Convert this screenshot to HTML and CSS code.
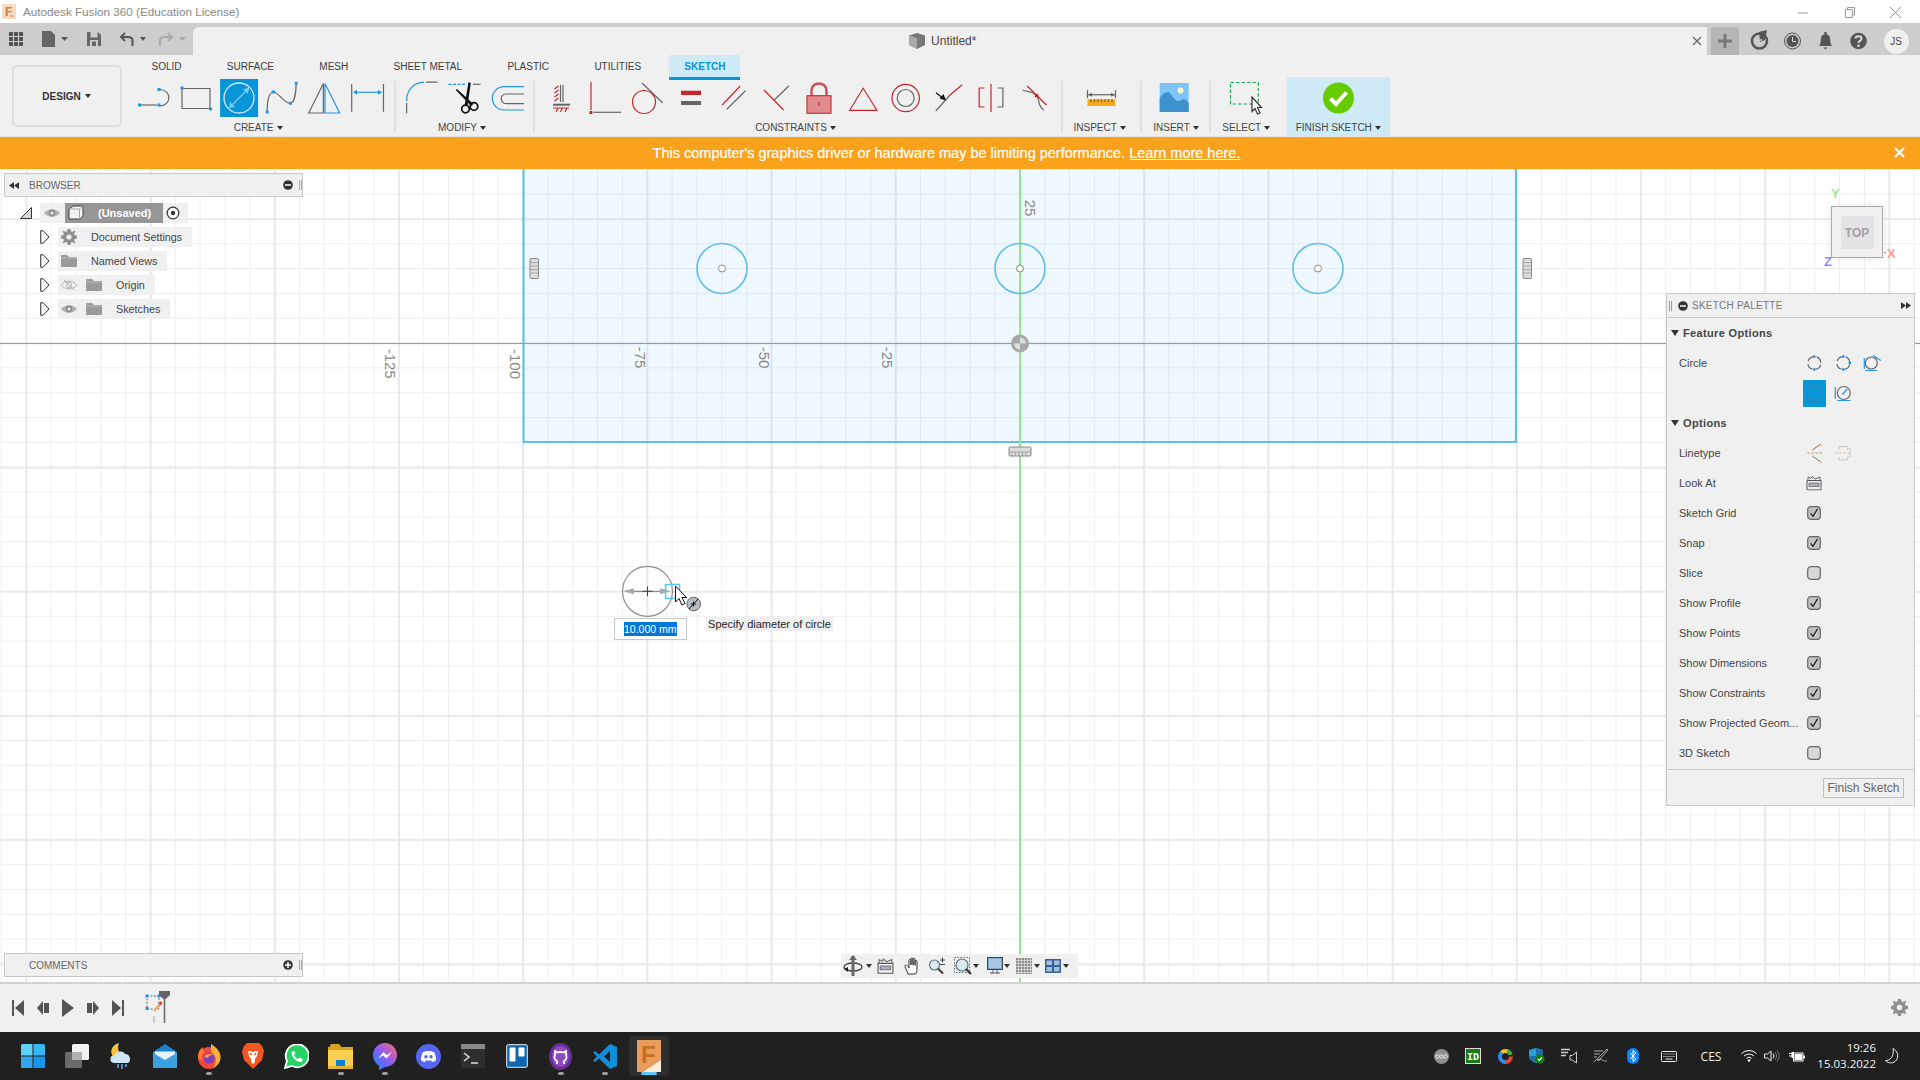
FILE: index.html
```html
<!DOCTYPE html>
<html lang="en">
<head>
<meta charset="utf-8">
<title>Autodesk Fusion 360</title>
<link rel="stylesheet" href="styles.css">
</head>
<body>
<svg class="defs" width="0" height="0">
  <symbol id="eye" viewBox="0 0 16 10"><path d="M0 5C4 0 12 0 16 5C12 10 4 10 0 5Z" fill="#b4b4b4"/><circle cx="8" cy="5" r="3.4" fill="#8c8c8c"/><circle cx="8" cy="5" r="1.6" fill="#eee"/></symbol>
  <symbol id="folder" viewBox="0 0 16 12"><path d="M0 0H6L8 2H16V12H0Z" fill="#9b9b9b"/><path d="M0 3H16" stroke="#c8c8c8" stroke-width=".8"/></symbol>
  <symbol id="gear" viewBox="0 0 16 16"><path d="M6.6 0H9.4L9.8 2.2L11.4 2.9L13.3 1.6L14.4 2.7L13.1 4.6L13.8 6.2L16 6.6V9.4L13.8 9.8L13.1 11.4L14.4 13.3L13.3 14.4L11.4 13.1L9.8 13.8L9.4 16H6.6L6.2 13.8L4.6 13.1L2.7 14.4L1.6 13.3L2.9 11.4L2.2 9.8L0 9.4V6.6L2.2 6.2L2.9 4.6L1.6 2.7L2.7 1.6L4.6 2.9L6.2 2.2Z" fill="#8f8f8f"/><circle cx="8" cy="8" r="2.6" fill="#f0f0f0"/></symbol>
  <symbol id="lookat" viewBox="0 0 16 15"><path d="M1 5H15V14.4H1Z" fill="#f0f0f0" stroke="#555" stroke-width="1"/><path d="M3 7.5H13V11H3Z" fill="#a9b4c0" stroke="#555" stroke-width=".7"/><path d="M2 5V1.5L5 3L6 1L9 3.5L14 1.5V5" fill="none" stroke="#666" stroke-width="1"/></symbol>
  <symbol id="tick" viewBox="0 0 14 14"><rect x=".7" y=".7" width="12.6" height="12.6" rx="3" fill="#c2c2c2" stroke="#666" stroke-width="1.2"/><path d="M3.6 7.4L6 10.3L10.6 2.8" fill="none" stroke="#111" stroke-width="1.2"/></symbol>
  <symbol id="untick" viewBox="0 0 14 14"><rect x=".7" y=".7" width="12.6" height="12.6" rx="3" fill="#d8d8d8" stroke="#666" stroke-width="1.2"/></symbol>
</svg>

<header class="titlebar">
  <svg class="applogo" width="14" height="15" viewBox="0 0 14 15"><rect width="14" height="15" fill="#f6dcc2"/><text x="3" y="12" class="applogo-f">F</text><rect x="8" y="11" width="4" height="2" fill="#f0b080"/></svg>
  <span class="apptitle">Autodesk Fusion 360 (Education License)</span>
  <div class="winctl">
    <svg width="46" height="20" viewBox="0 0 46 20"><path d="M18 11H28" stroke="#999"/></svg>
    <svg width="46" height="20" viewBox="0 0 46 20"><path d="M19.5 7.5H26.5V15.5H19.5ZM21.5 7V5.5H28.5V13H27" fill="none" stroke="#999"/></svg>
    <svg width="46" height="20" viewBox="0 0 46 20"><path d="M18 5L29 16M29 5L18 16" stroke="#999"/></svg>
  </div>
</header>

<div class="tabrow">
  <svg class="quick" width="193" height="28" viewBox="0 0 193 28">
    <g fill="#555"><path d="M9 5h4v4H9zM14 5h4v4h-4zM19 5h4v4h-4zM9 10h4v4H9zM14 10h4v4h-4zM19 10h4v4h-4zM9 15h4v4H9zM14 15h4v4h-4zM19 15h4v4h-4z"/>
    <path d="M42 4H51L55 8V20H42Z" fill="#666"/><path d="M61 10H68L64.500 14Z"/>
    <path d="M87 5H98L101 8V19H87Z" fill="#666"/>
    <path d="M140 10H146L143 14Z"/></g>
    <path d="M90.500 5H97.500V10.500H90.500Z" fill="#cdcdcd"/><path d="M90 13H98V19H90Z" fill="#cdcdcd"/><path d="M92 14.500H96V19H92Z" fill="#666"/>
    <path d="M132.500 19V13C132.500 10.500 130 10 127 10H122M125 6L121 10L125 14" fill="none" stroke="#555" stroke-width="2"/>
    <path d="M160 19V13C160 10.500 162.500 10 165 10H171M168 6L172 10L168 14" fill="none" stroke="#aaa" stroke-width="2"/>
    <path d="M179 10H186L182.500 14Z" fill="#aaa"/>
  </svg>
  <div class="doctab">
    <span></span>
    <div class="docname">
      <svg width="16" height="16" viewBox="0 0 16 16"><path d="M8 0L16 2.500V12L8 16L0 12V2.500Z" fill="#777"/><path d="M0 2.500L8 5V16L0 12Z" fill="#aaa"/></svg>
      <span>Untitled*</span>
    </div>
    <svg class="docclose" width="12" height="12" viewBox="0 0 12 12"><path d="M2 2L10 10M10 2L2 10" stroke="#666" stroke-width="1.300"/></svg>
  </div>
  <div class="acct">
    <div class="plus"><svg width="14" height="14" viewBox="0 0 14 14"><path d="M7 0V14M0 7H14" stroke="#777" stroke-width="3"/></svg></div>
    <svg class="acct-i" width="33" height="28" viewBox="0 0 33 28"><circle cx="16.500" cy="14" r="7.500" fill="none" stroke="#555" stroke-width="2.500"/><path d="M16 5L24 3L22 13L17 15Z" fill="#555"/><path d="M12 13H19" stroke="#ccc" stroke-width="1.500"/></svg>
    <svg class="acct-i" width="33" height="28" viewBox="0 0 33 28"><circle cx="16.500" cy="14" r="8" fill="none" stroke="#555" stroke-width="1"/><circle cx="16.500" cy="14" r="6" fill="#555"/><path d="M16.500 10V14.500H20" fill="none" stroke="#ddd" stroke-width="1"/></svg>
    <svg class="acct-i" width="33" height="28" viewBox="0 0 33 28"><path d="M10 19C12 17 11.500 14 12 11C12.500 8 14.500 7 16.500 7C18.500 7 20.500 8 21 11C21.500 14 21 17 23 19ZM14.500 20.500H18.500L16.500 22.500Z" fill="#555"/><circle cx="16.500" cy="6" r="1.300" fill="#555"/></svg>
    <svg class="acct-i" width="33" height="28" viewBox="0 0 33 28"><circle cx="16.500" cy="14" r="8.300" fill="#555"/><path d="M13.500 11.500C13.500 8.500 19.500 8.500 19.500 11.500C19.500 14 16.500 13.500 16.500 16" fill="none" stroke="#ddd" stroke-width="2"/><circle cx="16.500" cy="18.800" r="1.300" fill="#ddd"/></svg>
    <div class="avatar">JS</div>
  </div>
</div>

<section class="ribbon">
  <div class="design">DESIGN<i class="car car-dark"></i></div>
  <div class="rib-main">
    <nav class="tabs">
      <span class="tab">SOLID</span><span class="tab">SURFACE</span><span class="tab">MESH</span><span class="tab">SHEET METAL</span><span class="tab">PLASTIC</span><span class="tab">UTILITIES</span><span class="tab tab-on">SKETCH</span>
    </nav>
    <div class="tools">
      <div class="grp grp-create">
        <div class="cells">
          <svg class="ic" viewBox="0 0 43.200 38"><path class="s-g" d="M9 26H25"/><path class="s-g" d="M27.500 10.500C40 10.500 40 27 27.500 27"/><path class="f-b" d="M6 24.500h3v3H6zM25.500 24.500h3v3h-3zM25.500 9h3v3h-3z"/></svg>
          <svg class="ic" viewBox="0 0 43.200 38"><path class="s-g" d="M7 9.500H35V29.500H7Z"/><path class="f-b" d="M5.500 7.500h3v3h-3zM34 28.500h3v3h-3z"/></svg>
          <svg class="ic" viewBox="0 0 43.200 38"><rect x="2.100" width="38" height="38" fill="#0696d7"/><circle cx="21" cy="19" r="15" fill="none" stroke="#d5e9f5" stroke-width="1.300"/><path d="M11 29L31 9" stroke="#7ccbf0" stroke-width="1.300"/><path d="M11 29L12 23L17 28ZM31 9L25 10L30 15Z" fill="#7ccbf0"/></svg>
          <svg class="ic" viewBox="0 0 43.200 38"><path class="s-g" d="M6.200 33C6 22 8 13 12.400 13C18 13 23 25 29.500 24.300C33 24 35 15 35.200 4.300"/><path class="f-b" d="M4.700 31.500h3v3h-3zM10.900 11.500h3v3h-3zM28 22.800h3v3h-3zM33.700 2.800h3v3h-3z"/></svg>
          <svg class="ic" viewBox="0 0 43.200 38"><path class="s-g" d="M4.700 34L19.400 4.500V34Z"/><path class="s-b" d="M21 34H35.700L21 4.500Z"/></svg>
          <svg class="ic" viewBox="0 0 43.200 38"><path class="s-g" d="M4.700 5V32.700M36.500 5V32.700"/><path class="s-b" d="M7 13.300H34"/><path class="f-b" d="M6 13.300L10 10.800V15.800ZM35 13.300L31 10.800V15.800Z"/></svg>
        </div>
        <div class="lbl lbl-l">CREATE<i class="car"></i></div>
      </div>
      <i class="sep"></i>
      <div class="grp grp-modify">
        <div class="cells">
          <svg class="ic" viewBox="0 0 43.200 38"><path class="s-b" d="M6.600 22C6.600 12 13 3.500 24 3.200"/><path class="s-g" d="M6.600 24V34.300M26 3.200H37.600"/></svg>
          <svg class="ic" viewBox="0 0 43.200 38"><path class="s-b dash" d="M5.500 5.300H22"/><path class="s-g" d="M30 5.300H37.500"/><path d="M25.500 3L27.800 4L24.500 27H21.500ZM12.800 11L14 10L30.500 25L28 27Z" fill="#111"/><circle cx="22.500" cy="30" r="3.800" fill="none" stroke="#111" stroke-width="1.800"/><circle cx="31" cy="27.500" r="3.800" fill="none" stroke="#111" stroke-width="1.800"/></svg>
          <svg class="ic" viewBox="0 0 43.200 38"><path class="s-b" d="M37 7.700H17A11.650 11.650 0 0 0 17 31H37"/><path class="s-g" d="M37 15H19A4.800 4.800 0 0 0 19 24.600H37"/></svg>
        </div>
        <div class="lbl lbl-l">MODIFY<i class="car"></i></div>
      </div>
      <i class="sep"></i>
      <div class="grp grp-cons">
        <div class="cells">
          <svg class="ic" viewBox="0 0 43.200 38"><path class="s-g" d="M21.500 6V23M24 6V23"/><path d="M14 25.700H31" stroke="#666" stroke-width="2"/><path class="s-r" d="M19.500 7L15.500 10M19.500 11L15.500 14M19.500 15L15.500 18M19.500 19L15.500 22M17 33L19 29M21.500 33L23.500 29M26 33L28 29M14 29H30"/></svg>
          <svg class="ic" viewBox="0 0 43.200 38"><path class="s-r" d="M8 3V31"/><path class="s-g" d="M10.500 33.300H38"/><path d="M6.500 32h3v3h-3z" fill="#c8242c"/></svg>
          <svg class="ic" viewBox="0 0 43.200 38"><circle class="s-r" cx="18" cy="23" r="11.500"/><path class="s-g" d="M16 4L36.600 23.700"/></svg>
          <svg class="ic" viewBox="0 0 43.200 38"><path d="M12 11.700H32V16H12Z" fill="#c8242c"/><path d="M12 22H32V26H12Z" fill="#666"/></svg>
          <svg class="ic" viewBox="0 0 43.200 38"><path class="s-r" d="M10.200 26L28.200 7"/><path class="s-g" d="M14.800 30.300L33.500 11.700"/></svg>
          <svg class="ic" viewBox="0 0 43.200 38"><path class="s-r" d="M9 11L28.600 31"/><path class="s-g" d="M19.300 21L34 6.700"/></svg>
          <svg class="ic" viewBox="0 0 43.200 38"><path d="M13.500 17V11.800C13.500 2 28.500 2 28.500 11.800V17" fill="none" stroke="#c8525a" stroke-width="2.500"/><rect x="9" y="16.700" width="24" height="17.600" fill="#e08c8e" stroke="#c8353c" stroke-width="1.200"/><path class="s-r" d="M21 23V27"/></svg>
          <svg class="ic" viewBox="0 0 43.200 38"><path class="s-r" d="M7.600 31.300H34.900L21.200 9.300Z"/></svg>
          <svg class="ic" viewBox="0 0 43.200 38"><circle class="s-r" cx="20.700" cy="19" r="13.700"/><circle class="s-g" cx="20.700" cy="19" r="8.500"/></svg>
          <svg class="ic" viewBox="0 0 43.200 38"><path class="s-g" d="M7.800 32L22 16"/><path class="s-r" d="M22 16L34.200 5.700"/><path d="M8 13.700L14 18.500" stroke="#111" stroke-width="1.300"/><path d="M18 21.500L11.500 19.500L15.500 15Z" fill="#111"/></svg>
          <svg class="ic" viewBox="0 0 43.200 38"><path class="s-r" d="M13.500 9H8.200V28H13.500M20 5V33"/><path class="s-g" d="M26.500 9H31.900V28H26.500"/></svg>
          <svg class="ic" viewBox="0 0 43.200 38"><path class="s-r" d="M13.200 7L32.400 26"/><path class="s-g" d="M8.500 11C14 13 19 12 23 17C26 21 23 27 30 31"/><path d="M20.900 14.900h3.400v3.400h-3.400z" fill="#c8242c"/></svg>
        </div>
        <div class="lbl lbl-l">CONSTRAINTS<i class="car"></i></div>
      </div>
      <i class="sep"></i>
      <div class="grp grp-inspect">
        <svg class="ic" viewBox="0 0 43.200 38"><path d="M9.500 11V19M37.500 11V19" stroke="#666"/><path d="M10 15.700H37" stroke="#666"/><path d="M10 15.700L14 13.700V17.700ZM37 15.700L33 13.700V17.700Z" fill="#666"/><rect x="9.500" y="20.300" width="28" height="6.700" fill="#f5a81e"/><path d="M13 20.300V23M16.500 20.300V23M20 20.300V23M23.500 20.300V23M27 20.300V23M30.500 20.300V23M34 20.300V23" stroke="#8a6010"/></svg>
        <div class="lbl">INSPECT<i class="car"></i></div>
      </div>
      <i class="sep"></i>
      <div class="grp grp-insert">
        <svg class="ic" viewBox="0 0 43.200 38"><rect x="5.700" y="4" width="29" height="29" fill="#7dc4fa"/><path d="M5.700 33V19C8 15 11 13 14 13C17 13 20 22 24 22C27 22 28 20 30 20C32 20 33 22 34.700 24V33Z" fill="#3d92cc"/><circle cx="26.500" cy="11.500" r="3" fill="#fdf6c4"/></svg>
        <div class="lbl">INSERT<i class="car"></i></div>
      </div>
      <i class="sep"></i>
      <div class="grp grp-select">
        <svg class="ic" viewBox="0 0 43.200 38"><path d="M8.500 3.500H36.300V25H8.500Z" fill="none" stroke="#19a84b" stroke-width="1.200" stroke-dasharray="3.500 2"/><path d="M30 18V32.500L33 29.500L35.500 35L38 34L35.500 28.500H39.500Z" fill="#fff" stroke="#333"/></svg>
        <div class="lbl">SELECT<i class="car"></i></div>
      </div>
      <div class="grp grp-finish">
        <svg class="ic ic-finish" viewBox="0 0 43 38"><circle cx="21.500" cy="19" r="15.500" fill="#66cc00"/><path d="M13.500 19.500L19 25L29.500 13.500" fill="none" stroke="#fff" stroke-width="4"/></svg>
        <div class="lbl">FINISH SKETCH<i class="car"></i></div>
      </div>
    </div>
  </div>
</section>

<div class="banner">
  <p class="banner-text">This computer's graphics driver or hardware may be limiting performance. <a class="banner-link">Learn more here.</a></p>
  <svg class="banner-x" width="11" height="11" viewBox="0 0 11 11"><path d="M1 1L10 10M10 1L1 10" stroke="#fff" stroke-width="2"/></svg>
</div>

<main class="canvas">
  <svg class="scene" width="1920" height="813" viewBox="0 0 1920 813">
    <defs>
      <pattern id="minor" patternUnits="userSpaceOnUse" x="0.900" y="-0.340" width="24.840" height="24.840"><path d="M.5 0V24.840M0 .5H24.840" stroke="#eeeeee" fill="none"/></pattern>
      <pattern id="major" patternUnits="userSpaceOnUse" x="25.400" y="49.300" width="124.200" height="124.200"><path d="M1 0V124.200M0 1H124.200" stroke="#e6e6e6" stroke-width="1.600" fill="none"/></pattern>
    </defs>
    <rect width="1920" height="813" fill="#fff"/>
    <rect width="1920" height="813" fill="url(#minor)"/>
    <rect width="1920" height="813" fill="url(#major)"/>
    <rect x="523.500" y="-5" width="992.500" height="278" fill="#84ccf8" fill-opacity=".13" stroke="#5fbde9" stroke-width="2"/>
    <path d="M0 174.500H1920" stroke="#e27b7d"/>
    <path d="M1020 0V813" stroke="#93e296" stroke-width="2"/>
    <g fill="none" stroke="#5fbde9" stroke-width="1.600">
      <circle cx="722" cy="99.500" r="25"/><circle cx="1020" cy="99.500" r="25"/><circle cx="1318" cy="99.500" r="25"/>
    </g>
    <g fill="#fff" stroke="#888" stroke-width="1">
      <circle cx="722" cy="99.500" r="3.500"/><circle cx="1020" cy="99.500" r="3.500"/><circle cx="1318" cy="99.500" r="3.500"/>
    </g>
    <circle cx="1020" cy="174.500" r="7.500" fill="#d8dfe0" stroke="#a8a8a8" stroke-width="3"/>
    <path d="M1013 174.500A7 7 0 0 1 1020 167.500V174.500H1027A7 7 0 0 1 1020 181.500V174.500H1013Z" fill="#a8a8a8"/>
    <g fill="#dcdcdc" stroke="#888">
      <rect x="530" y="89.500" width="8.500" height="20" rx="1"/><rect x="1523" y="89.500" width="8.500" height="20" rx="1"/><rect x="1009" y="278" width="22" height="9" rx="1"/>
    </g>
    <path d="M530 93.500H538M530 97H538M530 100.500H538M530 104H538M1523 93.500H1531M1523 97H1531M1523 100.500H1531M1523 104H1531M1012 283V287M1015.500 283V287M1019 283V287M1022.500 283V287M1026 283V287M1009 283H1031" stroke="#999" stroke-width=".8"/>
    <g class="tick">
      <text transform="translate(390.400 194.700) rotate(90)">-125</text>
      <text transform="translate(515 195) rotate(90)">-100</text>
      <text transform="translate(640 188.500) rotate(90)">-75</text>
      <text transform="translate(764 188.500) rotate(90)">-50</text>
      <text transform="translate(887.500 188.500) rotate(90)">-25</text>
      <text transform="translate(1030.500 39) rotate(90)">25</text>
    </g>
    <circle cx="647.500" cy="422.300" r="25" fill="none" stroke="#8c8c8c" stroke-width="1.200"/>
    <path d="M625 422.300H665" stroke="#777"/><path d="M647.500 417.300V427.300M642.500 422.300H652.500" stroke="#444"/>
    <path d="M623 422.300L634 419.300V425.300ZM671 422.300L660 419.300V425.300Z" fill="#aaa"/>
    <rect x="665.500" y="415.500" width="14" height="14" fill="none" stroke="#5bc4f5" stroke-width="1.500"/>
    <path d="M675.500 417V433L679 429.500L682 436L685 434.500L682 428.500H686.500Z" fill="#fff" stroke="#111"/>
    <circle cx="693.700" cy="435" r="6.800" fill="#b8bcc4" stroke="#666"/>
    <path d="M689 440L698 430M691 435H696M693.500 432.500V437.500" stroke="#111" fill="none"/>
  </svg>

  <aside class="panel browser">
    <div class="phead">
      <svg width="10" height="7" viewBox="0 0 10 7"><path d="M5 0V7L0 3.500ZM10 0V7L5 3.500Z" fill="#333"/></svg>
      <span class="phead-t">BROWSER</span>
      <svg class="minus" width="10" height="10" viewBox="0 0 10 10"><circle cx="5" cy="5" r="4.800" fill="#333"/><path d="M2 5H8" stroke="#fff" stroke-width="1.500"/></svg>
      <svg class="grip" width="3" height="10" viewBox="0 0 3 10"><path d="M.5 0V10M2.500 0V10" stroke="#999" stroke-width=".8"/></svg>
    </div>
  </aside>

  <div class="tree">
    <div class="trow trow-top">
      <svg class="exp exp-top" width="12" height="12" viewBox="0 0 12 12"><path d="M.5 11.500H11.500V.5Z" fill="#d8d8d8" stroke="#333"/></svg>
      <div class="chip">
        <svg class="i-eye" width="25" height="10"><use href="#eye" x="4" width="16" height="10"/></svg>
        <div class="active">
          <svg width="16" height="15" viewBox="0 0 16 15"><path d="M1 4L5 1H15V11L12 14H1Z" fill="#f2f2f2" stroke="#444"/><path d="M11.500 14V4H1M11.500 4L15 1" fill="none" stroke="#aaa"/></svg>
          <span>(Unsaved)</span>
        </div>
        <svg class="i-radio" width="25" height="14" viewBox="0 0 25 14"><circle cx="10" cy="7" r="5.800" fill="#fff" stroke="#333" stroke-width="1.200"/><circle cx="10" cy="7" r="2.200" fill="#333"/></svg>
      </div>
    </div>
    <div class="trow">
      <svg class="exp" width="10" height="14" viewBox="0 0 10 14"><path d="M.7.7H3L9 7L3 13.300H.7Z" fill="#f4f4f4" stroke="#333"/></svg>
      <div class="chip"><span class="slot"><svg width="16" height="16"><use href="#gear"/></svg></span><span class="ctext">Document Settings</span></div>
    </div>
    <div class="trow">
      <svg class="exp" width="10" height="14" viewBox="0 0 10 14"><path d="M.7.7H3L9 7L3 13.300H.7Z" fill="#f4f4f4" stroke="#333"/></svg>
      <div class="chip"><span class="slot"><svg width="16" height="12"><use href="#folder"/></svg></span><span class="ctext">Named Views</span></div>
    </div>
    <div class="trow">
      <svg class="exp" width="10" height="14" viewBox="0 0 10 14"><path d="M.7.7H3L9 7L3 13.300H.7Z" fill="#f4f4f4" stroke="#333"/></svg>
      <div class="chip"><span class="slot"><svg width="16" height="12" viewBox="0 0 16 12"><path d="M0 6C4 1 12 1 16 6C12 11 4 11 0 6Z" fill="none" stroke="#b0b0b0"/><circle cx="8" cy="6" r="2.500" fill="none" stroke="#b0b0b0"/><path d="M3 1L13 11" stroke="#b0b0b0"/></svg></span><svg class="fold2" width="16" height="12"><use href="#folder"/></svg><span class="ctext">Origin</span></div>
    </div>
    <div class="trow">
      <svg class="exp" width="10" height="14" viewBox="0 0 10 14"><path d="M.7.7H3L9 7L3 13.300H.7Z" fill="#f4f4f4" stroke="#333"/></svg>
      <div class="chip"><span class="slot"><svg width="16" height="10"><use href="#eye"/></svg></span><svg class="fold2" width="16" height="12"><use href="#folder"/></svg><span class="ctext">Sketches</span></div>
    </div>
  </div>

  <svg class="viewcube-axes" width="80" height="90" viewBox="0 0 80 90">
    <text class="ax ax-y" x="5" y="14">Y</text>
    <text class="ax ax-x" x="61" y="74">X</text>
    <text class="ax ax-z" x="-2" y="82">Z</text>
    <path d="M58 68.500H60" stroke="#f88" stroke-width="1.500"/>
  </svg>
  <div class="viewcube"><div class="vc-face">TOP</div></div>

  <aside class="palette">
    <div class="pal-head">
      <svg width="3" height="10" viewBox="0 0 3 10"><path d="M.5 0V10M2.500 0V10" stroke="#888" stroke-width=".8"/></svg>
      <svg class="minus2" width="10" height="10" viewBox="0 0 10 10"><circle cx="5" cy="5" r="4.800" fill="#333"/><path d="M2 5H8" stroke="#fff" stroke-width="1.500"/></svg>
      <span class="pal-t">SKETCH PALETTE</span>
      <svg class="pal-fw" width="10" height="7" viewBox="0 0 10 7"><path d="M0 0V7L5 3.500ZM5 0V7L10 3.500Z" fill="#333"/></svg>
    </div>
    <div class="pal-body">
      <div class="prow phd"><i class="dn"></i>Feature Options</div>
      <div class="prow"><span class="plabel">Circle</span>
        <svg class="pc" viewBox="0 0 28 28"><circle class="s-g pdash" cx="14" cy="14" r="6.500"/><path class="f-b" d="M12.800 6.300h2.400v2.400h-2.400zM12.800 19.300h2.400v2.400h-2.400z"/></svg>
        <svg class="pc" viewBox="0 0 28 28"><circle class="s-g pdash" cx="14" cy="14" r="6.500"/><path class="f-b" d="M12.800 6.300h2.400v2.400h-2.400zM12.800 19.300h2.400v2.400h-2.400zM19.300 12.800h2.400v2.400h-2.400z"/></svg>
        <svg class="pc" viewBox="0 0 28 28"><circle class="s-g" cx="14" cy="14" r="6"/><path class="s-b" d="M7 9V20M8 21.500H20M16 6.500L23.500 11.500"/></svg>
      </div>
      <div class="prow"><span class="plabel"></span>
        <div class="pc-on"><svg width="23" height="27" viewBox="0 0 23 27"><circle cx="11.500" cy="13.500" r="7.500" fill="none" stroke="#3d7ea8" stroke-width="1.200"/></svg></div>
        <svg class="pc" viewBox="0 0 28 28"><circle class="s-g" cx="14.500" cy="14" r="6.500"/><path class="s-b" d="M6 8V20M8 21.500H21M13 15.500L18 10"/></svg>
      </div>
      <div class="prow phd"><i class="dn"></i>Options</div>
      <div class="prow"><span class="plabel">Linetype</span>
        <svg class="pc" viewBox="0 0 28 28"><path d="M7 14H22" stroke="#e58a3c" stroke-dasharray="2.500 1.500" fill="none"/><path d="M12 11L19 6M12 17L19 22" stroke="#777" fill="none"/><path d="M18 7L21 5M18 21L21 23M19 4.500L21 6.500M19 21.500L21 23.500" stroke="#e58a3c" fill="none"/></svg>
        <svg class="pc" viewBox="0 0 28 28"><path d="M10 7.500H18V10H21V18H18V21H10V18M10 10.500V7.500" fill="none" stroke="#c8c8c8"/><path d="M6 14H22" stroke="#eab48a" stroke-dasharray="2.500 1.500"/></svg>
      </div>
      <div class="prow"><span class="plabel">Look At</span><svg class="pc-l" viewBox="0 0 28 28"><use href="#lookat" x="6" y="6.500" width="16" height="15"/></svg></div>
      <div class="prow"><span class="plabel">Sketch Grid</span><svg class="chk"><use href="#tick"/></svg></div>
      <div class="prow"><span class="plabel">Snap</span><svg class="chk"><use href="#tick"/></svg></div>
      <div class="prow"><span class="plabel">Slice</span><svg class="chk"><use href="#untick"/></svg></div>
      <div class="prow"><span class="plabel">Show Profile</span><svg class="chk"><use href="#tick"/></svg></div>
      <div class="prow"><span class="plabel">Show Points</span><svg class="chk"><use href="#tick"/></svg></div>
      <div class="prow"><span class="plabel">Show Dimensions</span><svg class="chk"><use href="#tick"/></svg></div>
      <div class="prow"><span class="plabel">Show Constraints</span><svg class="chk"><use href="#tick"/></svg></div>
      <div class="prow"><span class="plabel">Show Projected Geom...</span><svg class="chk"><use href="#tick"/></svg></div>
      <div class="prow"><span class="plabel">3D Sketch</span><svg class="chk"><use href="#untick"/></svg></div>
    </div>
    <div class="pal-foot"><div class="finish-btn">Finish Sketch</div></div>
  </aside>

  <div class="dim-input"><span class="dim-sel">10.000 mm</span></div>
  <div class="tip">Specify diameter of circle</div>

  <aside class="panel comments">
    <div class="phead">
      <span class="phead-t phead-c">COMMENTS</span>
      <svg class="minus" width="10" height="10" viewBox="0 0 10 10"><circle cx="5" cy="5" r="4.800" fill="#333"/><path d="M2 5H8M5 2V8" stroke="#fff" stroke-width="1.500"/></svg>
      <svg class="grip" width="3" height="10" viewBox="0 0 3 10"><path d="M.5 0V10M2.500 0V10" stroke="#999" stroke-width=".8"/></svg>
    </div>
  </aside>

  <div class="navbar">
    <svg class="nv" width="24" height="24" viewBox="0 0 24 24"><ellipse cx="12" cy="13" rx="9" ry="4" fill="none" stroke="#444" stroke-width="1.300"/><path d="M12 2V22" stroke="#666" stroke-width="3"/><path d="M12 1L8 6H16Z" fill="#666"/><path d="M3 15L7 13V18Z" fill="#222"/></svg><i class="car nvc"></i>
    <svg class="nv nv-look" width="17" height="16"><use href="#lookat" width="17" height="16"/></svg>
    <svg class="nv nv-hand" width="18" height="18" viewBox="0 0 18 18"><path d="M4 17L1 9.500C.5 8 2.500 7.500 3.500 9L5 11V3.500C5 2 7 2 7 3.500V8V2C7 .5 9 .5 9 2V8V2.500C9 1 11 1 11 2.500V8.500V4.500C11 3 13 3 13 4.500V12C13 14 12.500 16 11.500 17Z" fill="#fff" stroke="#333"/></svg>
    <svg class="nv nv-z" width="18" height="18" viewBox="0 0 18 18"><circle cx="6.500" cy="8" r="5" fill="#dde8ee" stroke="#5a7a8c" stroke-width="1.200"/><path d="M10 11.500L15 16.500" stroke="#444" stroke-width="2.200"/><path d="M12 3H17M14.500 .5V5.500M12 7.500H17" stroke="#444"/></svg>
    <svg class="nv nv-fit" width="18" height="18" viewBox="0 0 18 18"><rect x=".5" y=".5" width="15" height="15" fill="none" stroke="#666" stroke-dasharray="1.500 1.500"/><circle cx="8" cy="8" r="6" fill="#dde8ee" stroke="#5a7a8c" stroke-width="1.200"/><path d="M12 12L17 17" stroke="#333" stroke-width="2.200"/></svg><i class="car nvc"></i>
    <svg class="nv nv-d" width="16" height="18" viewBox="0 0 16 18"><rect x=".5" y=".5" width="15" height="12" fill="#7fa8d0" stroke="#444"/><rect x="2" y="2" width="12" height="9" fill="#a6c8e6"/><path d="M6 13V16H3.500H12.500H10V13" fill="#eee" stroke="#666"/></svg><i class="car nvc"></i>
    <svg class="nv nv-g" width="16" height="16" viewBox="0 0 16 16"><rect width="16" height="16" fill="#8c8c8c"/><path d="M2.500 0V16M5.500 0V16M8.500 0V16M11.500 0V16M14.500 0V16M0 2.500H16M0 5.500H16M0 8.500H16M0 11.500H16M0 14.500H16" stroke="#ddd" stroke-width=".8"/></svg><i class="car nvc"></i>
    <svg class="nv nv-v" width="16" height="14" viewBox="0 0 16 14"><rect width="16" height="14" fill="#3c5f94"/><path d="M1.500 1.500H7V6H1.500ZM9 1.500H14.500V6H9ZM1.500 8H7V12.500H1.500ZM9 8H14.500V12.500H9Z" fill="#9fc0e0"/></svg><i class="car nvc"></i>
  </div>
</main>

<footer class="timeline">
  <svg class="tl-btn" width="150" height="20" viewBox="0 0 150 20">
    <path d="M11 2H13V18H11ZM14 10L23 2V18Z" fill="#555"/>
    <path d="M36 10L42 3V17ZM43 5H48V15H43Z" fill="#555"/>
    <path d="M61 1L73 10L61 19Z" fill="#555"/>
    <path d="M86 5H91V15H86ZM92 3L98 10L92 17Z" fill="#555"/>
    <path d="M111 2L120 10L111 18ZM121 2H123V18H121Z" fill="#555"/>
  </svg>
  <svg class="tl-mark" width="32" height="36" viewBox="0 0 32 36">
    <path d="M4 6H16V19H4Z" fill="none" stroke="#666" stroke-dasharray="2 1.500"/>
    <path d="M2.500 4.500h3v3h-3zM14.500 4.500h3v3h-3zM2.500 17h3v3h-3z" fill="#2196e3"/>
    <path d="M11 21L18 13" stroke="#e8b060" stroke-width="2.500"/><path d="M16.500 14.500L18.500 12" stroke="#e03c30" stroke-width="2.500"/>
    <path d="M11 26V33" stroke="#ccc" stroke-width="2"/>
    <path d="M16 1H27V5L21.500 10L16 5Z" fill="#666"/><path d="M21.500 8V33" stroke="#666" stroke-width="1.500"/>
  </svg>
  <svg class="tl-gear" width="17" height="17"><use href="#gear" width="17" height="17"/></svg>
</footer>

<footer class="taskbar">
  <div class="apps">
    <div class="app"><svg width="24" height="24" viewBox="0 0 24 24"><path d="M0 1.500A1.500 1.500 0 0 1 1.500 0H11.500V11.500H0Z" fill="#5ed2f5"/><path d="M12.500 0H22.500A1.500 1.500 0 0 1 24 1.500V11.500H12.500Z" fill="#38b8f0"/><path d="M0 12.500H11.500V24H1.500A1.500 1.500 0 0 1 0 22.500Z" fill="#2fa8ee"/><path d="M12.500 12.500H24V22.500A1.500 1.500 0 0 1 22.500 24H12.500Z" fill="#1a95ec"/></svg></div>
    <div class="app"><svg width="24" height="24" viewBox="0 0 24 24"><rect y="8" width="17" height="16" rx="1.500" fill="#6b6b6b"/><rect x="7" y="0" width="17" height="16" rx="1.500" fill="#f2f2f2"/><rect x="7" y="8" width="10" height="8" fill="#b0b0b0"/></svg></div>
    <div class="app"><svg width="24" height="26" viewBox="0 0 24 26"><path d="M10 0C8 5 9 10 15 12L5 14C0 10 2 2 10 0Z" fill="#f5c542"/><path d="M5 20A4 4 0 0 1 6 12C7 8 14 7 16 11A5 5 0 0 1 19 20Z" fill="#cfe6f6"/><path d="M9 21V25M13 21V26M17 21V24" stroke="#5ab4ee" stroke-width="1.500"/></svg></div>
    <div class="app"><svg width="24" height="24" viewBox="0 0 24 24"><path d="M0 8L12 0L24 8V24H0Z" fill="#1b7fcc"/><path d="M0 8H24V24H0Z" fill="#3ba0e0"/><path d="M2 7.500H22V10L12 16L2 10Z" fill="#e6f3fb"/></svg></div>
    <div class="app app-dot"><svg width="24" height="25" viewBox="0 0 24 25"><circle cx="12" cy="14" r="11" fill="#f2483c"/><path d="M14 0C20 4 24 8 23.500 14C23 19 20 22 16 24C20 19 20 12 14 8Z" fill="#fbb03b"/><path d="M1 14C1 8 3 5 6 3C5 6 6 7 8 8C5 9 4 13 6 17Z" fill="#ff7a2e"/><circle cx="12" cy="14" r="5.500" fill="#7c3fc4"/><path d="M7 13C9 9 14 9 16 11C13 11 11 12 11 14" fill="#ff9b3d"/></svg></div>
    <div class="app"><svg width="22" height="26" viewBox="0 0 22 26"><path d="M5 0H17L20 3L22 8L20 17L11 26L2 17L0 8L2 3Z" fill="#f1571f"/><path d="M6 8H9L11 9.500L13 8H16L15 13L13 16L13 19L11 21L9 19L9 16L7 13Z" fill="#fff"/><path d="M8 10L9.500 12M14 10L12.500 12" stroke="#f1571f" stroke-width="1.500"/></svg></div>
    <div class="app"><svg width="25" height="25" viewBox="0 0 25 25"><path d="M1 24L3 17A11.500 11.500 0 1 1 8 22Z" fill="#27d366" stroke="#fff" stroke-width="1.800"/><path d="M8.500 7C7 8.500 7.500 11 9.500 14C12 17 15 18.500 17 18C18.500 17.500 19 16 18.500 15L15.500 13.500L14 15C12.500 14.500 10.500 12.500 10 11L11.500 9.500L10 7Z" fill="#fff"/></svg></div>
    <div class="app app-dot"><svg width="25" height="25" viewBox="0 0 25 25"><path d="M0 3H2L3 0H11L13 3H25V25H0Z" fill="#fbcf4f"/><path d="M0 3H2L3 0H11L13 3H25V6H0Z" fill="#d9a21f"/><rect x="8" y="16" width="9" height="6" fill="#0f7fd0"/><path d="M0 22H25V25H0Z" fill="#e8b530"/></svg></div>
    <div class="app app-dot"><svg width="24" height="27" viewBox="0 0 24 27"><defs><linearGradient id="msg" x1="0" y1="1" x2="1" y2="0"><stop offset="0" stop-color="#0a8bff"/><stop offset=".5" stop-color="#8e5bf5"/><stop offset="1" stop-color="#ff6a6a"/></linearGradient></defs><path d="M12 0C18.600 0 24 5 24 12C24 19 18.600 24 12 24L6 27V22.500C2.500 20.500 0 16.500 0 12C0 5 5.400 0 12 0Z" fill="url(#msg)"/><path d="M5 15.500L10.500 9L14 12L19 9L13.500 15.500L10 12.500Z" fill="#fff"/></svg></div>
    <div class="app"><svg width="25" height="25" viewBox="0 0 25 25"><circle cx="12.500" cy="12.500" r="12.500" fill="#5865f2"/><path d="M7 8C10 6.500 15 6.500 18 8C19.500 10.500 20 13.500 20 16C18.500 17.500 17 18 16 18L15 16.500H10L9 18C8 18 6.500 17.500 5 16C5 13.500 5.500 10.500 7 8Z" fill="#fff"/><circle cx="10" cy="12.800" r="1.700" fill="#5865f2"/><circle cx="15" cy="12.800" r="1.700" fill="#5865f2"/></svg></div>
    <div class="app"><svg width="24" height="24" viewBox="0 0 24 24"><rect width="24" height="24" rx="1.500" fill="#2f2f2f"/><rect width="24" height="5" fill="#8a8a8a"/><path d="M3 9L8 13L3 17" fill="none" stroke="#e0e0e0" stroke-width="1.500"/><path d="M10 19H17" stroke="#e0e0e0" stroke-width="1.500"/></svg></div>
    <div class="app"><svg width="22" height="24" viewBox="0 0 22 24"><rect x=".7" y=".7" width="20.600" height="22.600" rx="1.500" fill="#0c66b0" stroke="#e8eef4"/><rect x="3.500" y="3.500" width="6" height="14" rx=".7" fill="#fff"/><rect x="12.500" y="3.500" width="6" height="9" rx=".7" fill="#fff"/></svg></div>
    <div class="app app-dot"><svg width="23" height="27" viewBox="0 0 23 27"><ellipse cx="11.500" cy="13.500" rx="11.500" ry="13.500" fill="#6b2d9a"/><ellipse cx="11.500" cy="13.500" rx="8.500" ry="10.500" fill="#8e4dbb"/><path d="M8 21V18C5.500 17 5 14 6 12V8L8.500 9.500C10 9 13 9 14.500 9.500L17 8V12C18 14 17.500 17 15 18V21" fill="none" stroke="#fff" stroke-width="1.800"/></svg></div>
    <div class="app app-dot"><svg width="24" height="25" viewBox="0 0 24 25"><path d="M17 0L24 3V22L17 25L6 14.500L2 18L0 16.500L4 12.500L0 8.500L2 7L6 10.500ZM17 7L11 12.500L17 18Z" fill="#0f8fdc" fill-rule="evenodd"/></svg></div>
    <div class="app app-on"><svg width="24" height="32" viewBox="0 0 24 32"><rect width="24" height="32" fill="#fbeedd"/><path d="M0 0H24V20L6 32H0Z" fill="#e89d5c"/><text x="4" y="23" class="fus-f">F</text></svg><i class="app-bar"></i></div>
  </div>
  <div class="tray">
    <div class="tr"><svg width="15" height="15" viewBox="0 0 15 15"><circle cx="7.500" cy="7.500" r="7.500" fill="#8f8f8f"/><circle cx="3.500" cy="7.500" r="1.700" fill="none" stroke="#eee"/><circle cx="7.500" cy="7.500" r="1.700" fill="none" stroke="#eee"/><circle cx="11.500" cy="7.500" r="1.700" fill="none" stroke="#eee"/></svg></div>
    <div class="tr"><svg width="16" height="16" viewBox="0 0 16 16"><rect x=".5" y=".5" width="15" height="15" fill="#1a7a1a" stroke="#ddd"/><text x="8" y="12" class="id-t">ID</text></svg></div>
    <div class="tr"><svg width="15" height="15" viewBox="0 0 15 15"><circle cx="7.500" cy="7.500" r="5.500" fill="none" stroke="#e8452c" stroke-width="4" stroke-dasharray="10 30"/><circle cx="7.500" cy="7.500" r="5.500" fill="none" stroke="#2c8af0" stroke-width="4" stroke-dasharray="12 30" stroke-dashoffset="-9"/><circle cx="7.500" cy="7.500" r="5.500" fill="none" stroke="#f8c11c" stroke-width="4" stroke-dasharray="7 30" stroke-dashoffset="-21"/><circle cx="7.500" cy="7.500" r="5.500" fill="none" stroke="#2eb84c" stroke-width="4" stroke-dasharray="5 30" stroke-dashoffset="-27"/></svg></div>
    <div class="tr"><svg width="16" height="16" viewBox="0 0 16 16"><path d="M7 0L14 2V8C14 11 11 13.500 7 15C3 13.500 0 11 0 8V2Z" fill="#2a9fd8"/><path d="M7 0L14 2V8H7V0ZM0 8H7V15C3 13.500 0 11 0 8Z" fill="#1c6fa8"/><circle cx="11" cy="11" r="4.700" fill="#107c10"/><path d="M8.800 11L10.300 12.500L13 9.500" fill="none" stroke="#fff" stroke-width="1.200"/></svg></div>
    <div class="tr"><svg width="16" height="16" viewBox="0 0 16 16"><path d="M0 1.500H9M0 4.500H7M0 7.500H5" stroke="#ccc" stroke-width="1.300"/><path d="M9 7.500H11.500L15.500 4V15L11.500 12H9Z" fill="none" stroke="#ccc"/></svg></div>
    <div class="tr"><svg width="16" height="16" viewBox="0 0 16 16"><path d="M1 3H10M1 6H7M1 9H4M1 14C4 9 5 14 7 12C9 10 10 14 14 13M5 10L14 1L15 2L7 11L4.500 12Z" fill="none" stroke="#aaa"/></svg></div>
    <div class="tr"><svg width="12" height="16" viewBox="0 0 12 16"><rect width="12" height="16" rx="6" fill="#0a84ff"/><path d="M3 5L9 11L6 13.500V2.500L9 5L3 11" fill="none" stroke="#fff"/></svg></div>
    <div class="tr tr-k"><svg width="16" height="11" viewBox="0 0 16 11"><rect x=".5" y=".5" width="15" height="10" rx="1" fill="none" stroke="#eee"/><path d="M2.500 3H13.500M2.500 5.500H13.500" stroke="#eee" stroke-dasharray="1 1"/><path d="M4.500 8H11.500" stroke="#eee"/></svg></div>
    <div class="tr tr-c">CES</div>
    <div class="tr tr-w"><svg width="16" height="12" viewBox="0 0 16 12"><path d="M.5 3.500A11 11 0 0 1 15.500 3.500M3 6A7.500 7.500 0 0 1 13 6M5.500 8.300A3.500 3.500 0 0 1 10.500 8.300" fill="none" stroke="#fff"/><circle cx="8" cy="10.500" r="1.300" fill="#fff"/></svg></div>
    <div class="tr tr-s"><svg width="16" height="12" viewBox="0 0 16 12"><path d="M.5 4H3.500L7 1V11L3.500 8H.5Z" fill="none" stroke="#eee"/><path d="M9 3.500A4 4 0 0 1 9 8.500" fill="none" stroke="#eee"/><path d="M11 2A6 6 0 0 1 11 10M13 .5A8 8 0 0 1 13 11.500" fill="none" stroke="#777"/></svg></div>
    <div class="tr tr-p"><svg width="16" height="12" viewBox="0 0 16 12"><path d="M0 3.500H3M0 6H3" stroke="#fff"/><path d="M2.500 2H5V8H2.500Z" fill="#fff"/><rect x="4.500" y="3" width="9.500" height="8" fill="none" stroke="#fff"/><rect x="5.500" y="4" width="7.500" height="6" fill="#fff"/><path d="M14 5.500H16V8.500H14Z" fill="#fff"/></svg></div>
    <div class="clock"><span>19:26</span><span>15.03.2022</span></div>
    <div class="tr tr-m"><svg width="14" height="16" viewBox="0 0 14 16"><path d="M8 .5C12.500 3 14 8 11.500 12C9 15.500 3.500 16 .5 12.500C5 13 9.500 8 8 .5Z" fill="none" stroke="#eee"/></svg></div>
  </div>
</footer>
</body>
</html>
```

FILE: styles.css
```css
* { box-sizing: border-box; }
html, body { margin: 0; padding: 0; }
body {
  width: 1920px; height: 1080px; overflow: hidden;
  display: flex; flex-direction: column;
  font-family: "Liberation Sans", Arial, sans-serif;
  font-size: 11px; color: #3c3c3c; background: #fff;
}
svg { display: block; flex: none; }
.defs { position: absolute; }

/* title bar */
.titlebar { height: 23px; display: flex; align-items: center; background: #fff; padding-left: 2px; }
.applogo-f { font: bold 12px "Liberation Sans", sans-serif; fill: #d9772b; }
.apptitle { margin-left: 7px; font-size: 11.7px; color: #888; }
.winctl { margin-left: auto; display: flex; padding-right: 2px; }

/* tab row */
.tabrow { height: 32px; padding-top: 4px; background: #cdcdcd; display: flex; }
.quick { height: 28px; }
.doctab {
  width: 1513.5px; background: #f0f0f0; border-top-left-radius: 6px;
  display: grid; grid-template-columns: 1fr auto 1fr; align-items: center; padding-right: 14px;
}
.docname { display: flex; align-items: center; gap: 6px; font-size: 12px; color: #444; }
.docclose { justify-self: end; margin-right: -10px; }
.acct { display: flex; align-items: center; padding-left: 4.5px; }
.plus { width: 28px; height: 28px; background: #b5b5b5; border-radius: 3px 3px 0 0; display: flex; align-items: center; justify-content: center; }
.acct-i { margin-left: 0; }
.acct-i:first-of-type { margin-left: 3.5px; }
.avatar { width: 25px; height: 25px; margin-left: 9px; border-radius: 50%; background: #f0f0f0; font-size: 10px; color: #444; display: flex; align-items: center; justify-content: center; }

/* ribbon */
.ribbon { height: 82px; background: #f0f0f0; border-bottom: 1px solid #e2e2e2; display: flex; padding-left: 11.5px; }
.design {
  width: 110px; height: 62px; margin-top: 10px; border: 2px solid #dedede; border-radius: 5px;
  display: flex; align-items: center; justify-content: center; gap: 4px;
  font-size: 10px; font-weight: bold; color: #333;
}
.rib-main { flex: 1; display: flex; flex-direction: column; }
.tabs { height: 25px; margin-bottom: -3px; display: flex; padding-left: 14.5px; gap: 14.3px; position: relative; z-index: 1; }
.tab { padding: 0 15.5px; height: 25px; font-size: 10px; line-height: 23px; color: #3c3c3c; white-space: nowrap; }
.tab-on { background: #cdeaf6; border-bottom: 3px solid #0696d7; color: #0696d7; font-weight: bold; margin-left: -1.5px; padding: 0 15px; }
.tools { height: 59px; padding-left: 10px; display: flex; }
.grp { display: flex; flex-direction: column; align-items: center; padding-top: 2px; }
.cells { display: flex; }
.ic { width: 43.2px; height: 38px; fill: none; stroke-width: 1.2; }
.s-g { stroke: #666; fill: none; stroke-width: 1.2; }
.s-b { stroke: #2196e3; fill: none; stroke-width: 1.2; }
.s-r { stroke: #c8242c; fill: none; stroke-width: 1.2; }
.f-b { fill: #2196e3; }
.dash { stroke-dasharray: 3 1.5; }
.pdash { stroke-dasharray: 7 3.2; stroke-dashoffset: -1.6; }
.lbl { height: 19px; font-size: 10px; line-height: 20px; color: #444; white-space: nowrap; display: flex; align-items: center; gap: 3px; padding-top: 2px; }
.lbl-l { transform: translateX(-3px); }
.car { display: inline-block; width: 0; height: 0; border: 3px solid transparent; border-top: 4px solid #333; border-bottom: 0; }
.car-dark { border-top-color: #333; }
.sep { width: 2px; height: 51px; margin: 4px 4.5px 0 3px; background: #e0e0e0; }
.grp-create { width: 259.2px; }
.grp-modify { width: 129.6px; }
.grp-cons { width: 518.4px; }
.grp-inspect { width: 65px; margin-right: 4.6px; }
.grp-insert { width: 59.5px; }
.grp-select { width: 62px; margin-right: 9.5px; }
.grp-select .ic { margin-right: 5px; }
.grp-finish { width: 103px; background: #cdeaf6; }
.ic-finish { width: 43px; }

/* banner */
.banner { height: 32px; flex: none; background: #fba21c; display: flex; align-items: center; justify-content: center; padding-right: 27px; position: relative; }
.banner-text { margin: 0; font-size: 14.5px; color: #fff; -webkit-text-stroke: .2px #fff; white-space: nowrap; }
.banner-link { text-decoration: underline; }
.banner-x { position: absolute; right: 15px; top: 10px; }

/* canvas */
.canvas { height: 813px; flex: none; position: relative; overflow: hidden; }
.scene { position: absolute; inset: 0; }
.tick text { font: 15px "Liberation Sans", sans-serif; fill: #8a8a8a; text-anchor: middle; dominant-baseline: central; }

.panel { position: absolute; left: 4px; width: 299px; height: 24px; background: #f0f0f0; border: 1px solid #c8c8c8; }
.browser { top: 4px; }
.comments { bottom: 5px; height: 24px; }
.phead { height: 100%; display: flex; align-items: center; padding-left: 4px; }
.phead-t { margin-left: 10px; font-size: 10px; color: #666; }
.phead-c { margin-left: 20px; }
.minus { margin-left: auto; }
.grip { margin: 0 0 0 6.5px; }

.tree { position: absolute; left: 0; top: 33.5px; }
.trow { height: 20px; margin-bottom: 4px; display: flex; align-items: center; padding-left: 40px; }
.trow-top { padding-left: 20px; }
.exp { width: 10px; margin-right: 8px; }
.exp-top { width: 12px; margin-right: 8px; }
.chip { height: 20px; display: flex; align-items: center; background: #f0f0f0; padding-right: 10px; font-size: 10.8px; color: #444; }
.trow-top .chip { padding-right: 0; }
.slot { width: 22px; display: flex; justify-content: center; margin-right: 11px; }
.slot:has(+ .fold2) { margin-right: 6px; }
.fold2 { margin-right: 14px; }
.ctext { white-space: nowrap; }
.active { width: 98px; height: 20px; background: #969696; display: flex; align-items: center; padding-left: 3px; color: #fff; font-weight: bold; font-size: 11px; }
.active span { margin-left: 14px; }

/* view cube */
.viewcube-axes { position: absolute; left: 1826px; top: 15px; overflow: visible; }
.ax { font: bold 13px "Liberation Sans", sans-serif; }
.ax-y { fill: #9ae89a; }
.ax-x { fill: #ff9c9c; }
.ax-z { fill: #8d8dff; }
.viewcube { position: absolute; left: 1831px; top: 37px; width: 52px; height: 52px; background: #f0f0f0; border: 1px solid #ababab; box-shadow: 0 0 8px rgba(0,0,0,.1); display: flex; align-items: center; justify-content: center; padding-top: 1px; }
.vc-face { width: 33px; height: 33px; background: #e3e3e6; display: flex; align-items: center; justify-content: center; font-size: 12px; font-weight: bold; color: #a0a0a5; }

/* palette */
.palette { position: absolute; right: 5px; top: 124px; width: 249px; height: 513px; background: #f0f0f0; border: 1px solid #c8c8c8; display: flex; flex-direction: column; }
.pal-head { height: 24px; flex: none; border-bottom: 1px solid #c8c8c8; display: flex; align-items: center; padding-left: 2px; }
.minus2 { margin-left: 6px; }
.pal-t { margin-left: 4px; font-size: 10px; letter-spacing: .25px; color: #777; }
.pal-fw { margin-left: auto; margin-right: 3px; }
.pal-body { flex: 1; }
.prow { height: 30px; display: flex; align-items: center; padding-left: 12px; font-size: 11px; color: #444; }
.phd { padding-left: 4px; font-weight: bold; color: #444; letter-spacing: .35px; }
.dn { width: 0; height: 0; border: 4.5px solid transparent; border-top: 6px solid #333; border-bottom: 0; margin-right: 4px; }
.plabel { width: 121px; white-space: nowrap; }
.pc { width: 28.6px; height: 28px; }
.pc-l { width: 28px; height: 28px; }
.pc-on { width: 23px; height: 27px; margin: 0 3px 0 2.7px; background: #0696d7; border-radius: 1px; }
.chk { width: 14px; height: 14px; margin-left: 7px; }
.pal-foot { height: 36px; flex: none; border-top: 1px solid #c8c8c8; display: flex; align-items: flex-start; justify-content: flex-end; padding: 8px 10px 0 0; }
.finish-btn { width: 81px; height: 20px; border: 1px solid #bfbfbf; font-size: 12px; line-height: 18px; text-align: center; color: #666; }

/* on-canvas input */
.dim-input { position: absolute; left: 614px; top: 449px; width: 73px; height: 22px; background: #fff; border: 1px solid #c8c8c8; padding: 3px 0 0 9px; }
.dim-sel { display: block; width: max-content; height: 14px; white-space: nowrap; background: #0078d7; color: #fff; font-size: 10.5px; line-height: 14px; }
.tip { position: absolute; left: 706px; top: 447.5px; width: 127px; height: 14px; background: #f0f0f0; font-size: 11px; line-height: 14px; text-align: center; color: #222; white-space: nowrap; }

/* nav bar */
.navbar { position: absolute; left: 841px; top: 785px; width: 237px; height: 24px; background: #f0f0f0; display: flex; align-items: center; padding-left: 0; }
.nvc { margin-left: 1px; }
.nv + .nvc { margin-left: 1px; }
.nv-look { margin-left: 5px; }
.nv-hand { margin-left: 10px; }
.nv-z { margin-left: 6px; }
.nv-fit { margin-left: 8px; }
.nv-d { margin-left: 8px; }
.nv-g { margin-left: 6px; margin-right: 1px; }
.nv-v { margin-left: 5px; margin-right: 1px; }

/* timeline */
.timeline { height: 50px; flex: none; background: #f0f0f0; border-top: 2px solid #d2d2d2; display: flex; align-items: center; padding-right: 12.5px; }
.tl-btn { margin-left: 1px; }
.tl-mark { margin-left: -8px; }
.tl-gear { margin-left: auto; transform: translateY(-1px); }

/* taskbar */
.taskbar { height: 48px; flex: none; background: #202020; display: flex; align-items: center; padding: 0 12px 0 10.6px; color: #fff; }
.apps { display: flex; }
.app { width: 44px; height: 48px; display: flex; align-items: center; justify-content: center; position: relative; }
.app-dot::after { content: ""; position: absolute; left: 19px; bottom: 5px; width: 6px; height: 3px; border-radius: 2px; background: #9a9a9a; }
.app-on { background: #2e2e2e; border-radius: 4px; height: 40px; width: 40px; margin: 4px 0 0 2px; align-self: flex-start; }
.app-bar { position: absolute; left: 12px; bottom: 1px; width: 16px; height: 3px; border-radius: 2px; background: #5ac8fa; }
.fus-f { font: bold 24px "Liberation Sans", sans-serif; fill: #c8701f; }
.id-t { font: bold 10px "Liberation Mono", monospace; fill: #fff; text-anchor: middle; }
.tray { margin-left: auto; display: flex; align-items: center; }
.tr { width: 32px; display: flex; justify-content: center; }
.tr-k { width: 40px; }
.tr-c { width: 44px; font: 12px "Open Sans", sans-serif; color: #eee; }
.tr-w { width: 26px; margin-left: 3px; }
.tr-s { width: 20px; }
.tr-p { width: 30px; }
.clock { width: 64px; display: flex; flex-direction: column; align-items: flex-end; font: 11.5px/16px "Open Sans", sans-serif; color: #f2f2f2; }
.tr-m { width: 32px; }
```
